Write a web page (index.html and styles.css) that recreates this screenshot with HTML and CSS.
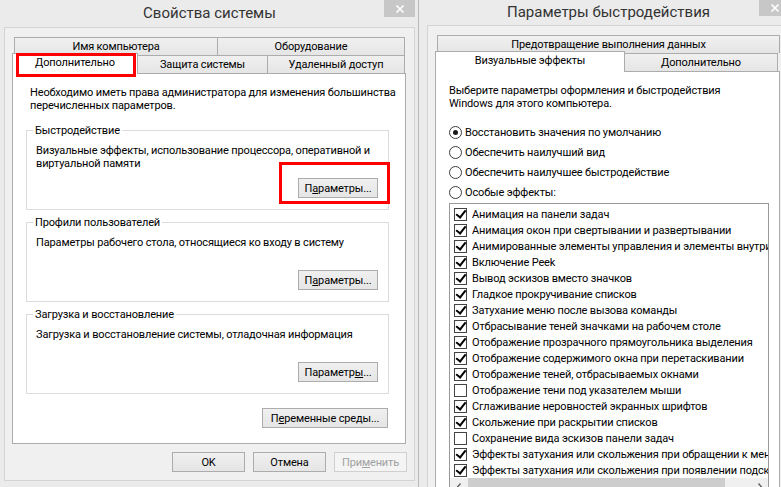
FILE: index.html
```html
<!DOCTYPE html>
<html lang="ru">
<head>
  <meta charset="UTF-8" />
  <title>Свойства системы</title>
  <link rel="stylesheet" href="styles.css">
</head>
<body>

  <div class="window window-sys">
    <div class="titlebar">
      <span class="title">Свойства системы</span>
      <span class="close"><svg width="10" height="8" viewBox="0 0 10 8"><path d="M1.5 0.5 L8.5 7.5 M8.5 0.5 L1.5 7.5" stroke="#fff" stroke-width="1.6" /></svg></span>
    </div>
    <div class="client">
      <div class="tabs">
        <div class="tab-row sys-back">
          <div class="tab">Имя компьютера</div>
          <div class="tab">Оборудование</div>
        </div>
        <div class="tab-row sys-front">
          <div class="tab active">Дополнительно<span class="mark mark-tab"></span></div>
          <div class="tab">Защита системы</div>
          <div class="tab">Удаленный доступ</div>
        </div>
      </div>

      <div class="panel panel-sys">
        <p class="intro">Необходимо иметь права администратора для изменения большинства<br>перечисленных параметров.</p>

        <fieldset class="group">
          <legend>Быстродействие</legend>
          <p>Визуальные эффекты, использование процессора, оперативной и<br>виртуальной памяти</p>
          <div class="group-actions">
            <button class="btn">П<u>а</u>раметры...<span class="mark mark-btn"></span></button>
          </div>
        </fieldset>

        <fieldset class="group">
          <legend>Профили пользователей</legend>
          <p>Параметры рабочего стола, относящиеся ко входу в систему</p>
          <div class="group-actions">
            <button class="btn">П<u>а</u>раметры...</button>
          </div>
        </fieldset>

        <fieldset class="group">
          <legend>Загрузка и восстановление</legend>
          <p>Загрузка и восстановление системы, отладочная информация</p>
          <div class="group-actions">
            <button class="btn">Параметр<u>ы</u>...</button>
          </div>
        </fieldset>

        <div class="env-row">
          <button class="btn btn-env">П<u>е</u>ременные среды...</button>
        </div>
      </div>

      <div class="dialog-buttons">
        <button class="btn btn-dlg">OK</button>
        <button class="btn btn-dlg">Отмена</button>
        <button class="btn btn-dlg" disabled>При<u>м</u>енить</button>
      </div>
    </div>
  </div>

  <div class="window window-perf">
    <div class="titlebar">
      <span class="title">Параметры быстродействия</span>
      <span class="close"><svg width="10" height="8" viewBox="0 0 10 8"><path d="M1.5 0.5 L8.5 7.5 M8.5 0.5 L1.5 7.5" stroke="#fff" stroke-width="1.6" /></svg></span>
    </div>
    <div class="client">
      <div class="tabs">
        <div class="tab-row perf-back">
          <div class="tab">Предотвращение выполнения данных</div>
        </div>
        <div class="tab-row perf-front">
          <div class="tab active">Визуальные эффекты</div>
          <div class="tab">Дополнительно</div>
        </div>
      </div>

      <div class="panel panel-perf">
        <p class="intro">Выберите параметры оформления и быстродействия<br>Windows для этого компьютера.</p>

        <ul class="radios">
          <li><span class="radio checked"></span>Восстановить значения по умолчанию</li>
          <li><span class="radio"></span>Обеспечить наилучший вид</li>
          <li><span class="radio"></span>Обеспечить наилучшее быстродействие</li>
          <li><span class="radio"></span>Особые эффекты:</li>
        </ul>

        <div class="listbox">
          <ul class="effects">
            <li><span class="check on"></span>Анимация на панели задач</li>
            <li><span class="check on"></span>Анимация окон при свертывании и развертывании</li>
            <li><span class="check on"></span>Анимированные элементы управления и элементы внутри окна</li>
            <li><span class="check on"></span>Включение Peek</li>
            <li><span class="check on"></span>Вывод эскизов вместо значков</li>
            <li><span class="check on"></span>Гладкое прокручивание списков</li>
            <li><span class="check on"></span>Затухание меню после вызова команды</li>
            <li><span class="check on"></span>Отбрасывание теней значками на рабочем столе</li>
            <li><span class="check on"></span>Отображение прозрачного прямоугольника выделения</li>
            <li><span class="check on"></span>Отображение содержимого окна при перетаскивании</li>
            <li><span class="check on"></span>Отображение теней, отбрасываемых окнами</li>
            <li><span class="check"></span>Отображение тени под указателем мыши</li>
            <li><span class="check on"></span>Сглаживание неровностей экранных шрифтов</li>
            <li><span class="check on"></span>Скольжение при раскрытии списков</li>
            <li><span class="check"></span>Сохранение вида эскизов панели задач</li>
            <li><span class="check on"></span>Эффекты затухания или скольжения при обращении к меню</li>
            <li><span class="check on"></span>Эффекты затухания или скольжения при появлении подсказок</li>
          </ul>
          <div class="hscroll">
            <span class="arrow"><svg width="6" height="8" viewBox="0 0 6 8"><path d="M4.5 0.5 L1.5 4 L4.5 7.5" fill="none" stroke="#606060" stroke-width="1.4" /></svg></span>
            <span class="track"><span class="thumb"></span></span>
            <span class="arrow"><svg width="6" height="8" viewBox="0 0 6 8"><path d="M1.5 0.5 L4.5 4 L1.5 7.5" fill="none" stroke="#606060" stroke-width="1.4" /></svg></span>
          </div>
        </div>
      </div>
    </div>
  </div>

</body>
</html>
```

FILE: styles.css
```css
* {
  box-sizing: border-box;
}

html, body {
  margin: 0;
}

body {
  width: 781px;
  height: 487px;
  overflow: hidden;
  display: flex;
  background-color: #ebebeb;
  font-family: Roboto, 'Noto Sans', sans-serif;
  font-size: 11px;
  letter-spacing: -0.15px;
  color: #000;
}

.window {
  flex: none;
  height: 487px;
  overflow: hidden;
  background-color: #ebebeb;
}

.window-sys {
  width: 419px;
  padding: 0 3px 0 4px;
  border-right: 1px solid #b9b9b9;
}

.window-perf {
  width: 378px;
  padding: 0 7px 0 8px;
}

.titlebar {
  display: grid;
  grid-template-columns: 1fr auto 1fr;
  height: 27px;
}

.window-perf .titlebar {
  height: 25px;
}

.title {
  grid-column: 2;
  font-size: 15px;
  line-height: 26px;
  letter-spacing: 0;
  color: #333;
  white-space: nowrap;
}

.window-perf .title {
  line-height: 24px;
}

.close {
  grid-column: 3;
  justify-self: end;
  width: 31px;
  height: 17px;
  background-color: #c7c7c7;
  display: flex;
  align-items: center;
  justify-content: center;
}

.window-perf .close {
  height: 16px;
}

.client {
  position: relative;
  background-color: #f0f0f0;
  border: 1px solid #d4d4d4;
  padding: 9px 8px 8px 7px;
}

.window-perf .client {
  padding: 9px 9px 0 7px;
  height: 480px;
}

.tab-row {
  display: grid;
  height: 18px;
  margin-left: 2px;
}

.sys-back {
  grid-template-columns: 204px 187px;
}

.sys-front {
  grid-template-columns: 124px 130px 137px;
}

.perf-back {
  grid-template-columns: 343px;
}

.perf-front {
  grid-template-columns: 188px 153px;
}

.tab {
  height: 18px;
  border: 1px solid #acacac;
  border-bottom: 0;
  background: linear-gradient(#f0f0f0, #e5e5e5);
  text-align: center;
  line-height: 17px;
  white-space: nowrap;
}

.tab + .tab {
  border-left: 0;
}

.tab.active {
  position: relative;
  z-index: 1;
  height: 21px;
  margin: -2px 0 0 -2px;
  background: #fff;
  line-height: 18px;
}

.panel {
  background-color: #fff;
  border: 1px solid #acacac;
}

.panel-sys {
  padding: 12px 16px 15px 13px;
}

p {
  margin: 0;
  line-height: 13px;
  white-space: nowrap;
}

.panel-sys .intro {
  padding-left: 4px;
}

.group {
  margin: 6px 0 0;
  padding: 0 10px 11px 9px;
  border: 1px solid #dcdcdc;
  min-width: 0;
}

.panel-sys .intro + .group {
  margin-top: 12px;
}

.group legend {
  margin-left: -3px;
  padding: 0 2px;
  line-height: 13px;
}

.group p {
  margin-top: 7px;
  height: 26px;
}

.group-actions {
  display: flex;
  justify-content: flex-end;
  margin-top: 8px;
}

.btn {
  position: relative;
  width: 80px;
  height: 20px;
  padding: 0;
  border: 1px solid #acacac;
  background: linear-gradient(#f0f0f0, #e5e5e5);
  font-family: inherit;
  font-size: inherit;
  letter-spacing: inherit;
  color: #000;
  white-space: nowrap;
}

.btn:disabled {
  color: #a0a0a0;
  border-color: #d0d0d0;
  background: #f4f4f4;
}

.env-row {
  display: flex;
  justify-content: flex-end;
  margin: 14px 1px 0 0;
}

.btn-env {
  width: 126px;
}

.dialog-buttons {
  display: flex;
  justify-content: flex-end;
  gap: 8px;
  margin: 8px -1px 0 0;
}

.btn-dlg {
  width: 73px;
}

.mark {
  position: absolute;
  border: 3px solid #f00;
  pointer-events: none;
}

.mark-tab {
  left: 3px;
  right: 1px;
  top: -1px;
  bottom: -3px;
}

.mark-btn {
  left: -20px;
  right: -13px;
  top: -17px;
  bottom: -7px;
}

.panel-perf {
  height: 420px;
  padding: 12px 0 0 13px;
}

.radios {
  list-style: none;
  margin: 12px 0 0;
  padding: 0;
}

.radios li {
  display: flex;
  align-items: center;
  height: 20px;
  white-space: nowrap;
}

.radio {
  position: relative;
  flex: none;
  width: 13px;
  height: 13px;
  margin-right: 3px;
  border: 1px solid #3c3c3c;
  border-radius: 50%;
  background-color: #fff;
}

.radio.checked::after {
  content: '';
  position: absolute;
  left: 3px;
  top: 3px;
  width: 5px;
  height: 5px;
  border-radius: 50%;
  background-color: #1a1a1a;
}

.listbox {
  width: 320px;
  margin-top: 1px;
  border: 1px solid #999;
  background-color: #fff;
}

.effects {
  list-style: none;
  margin: 0;
  padding: 2px 0 0 4px;
}

.effects li {
  display: flex;
  align-items: center;
  height: 16px;
  white-space: nowrap;
  overflow: hidden;
}

.check {
  position: relative;
  flex: none;
  width: 13px;
  height: 13px;
  margin-right: 5px;
  border: 1px solid #444;
  background-color: #fff;
}

.check.on::after {
  content: '';
  position: absolute;
  left: 1px;
  top: 1.5px;
  width: 8px;
  height: 4px;
  border-left: 2px solid #000;
  border-bottom: 2px solid #000;
  transform: rotate(-52deg);
}

.hscroll {
  display: flex;
  height: 17px;
  background-color: #f0f0f0;
}

.arrow {
  flex: none;
  width: 17px;
  display: flex;
  align-items: center;
  justify-content: center;
}

.track {
  flex: 1;
  padding: 0 0 0 1px;
}

.thumb {
  display: block;
  width: 257px;
  height: 17px;
  background-color: #cdcdcd;
}
```
